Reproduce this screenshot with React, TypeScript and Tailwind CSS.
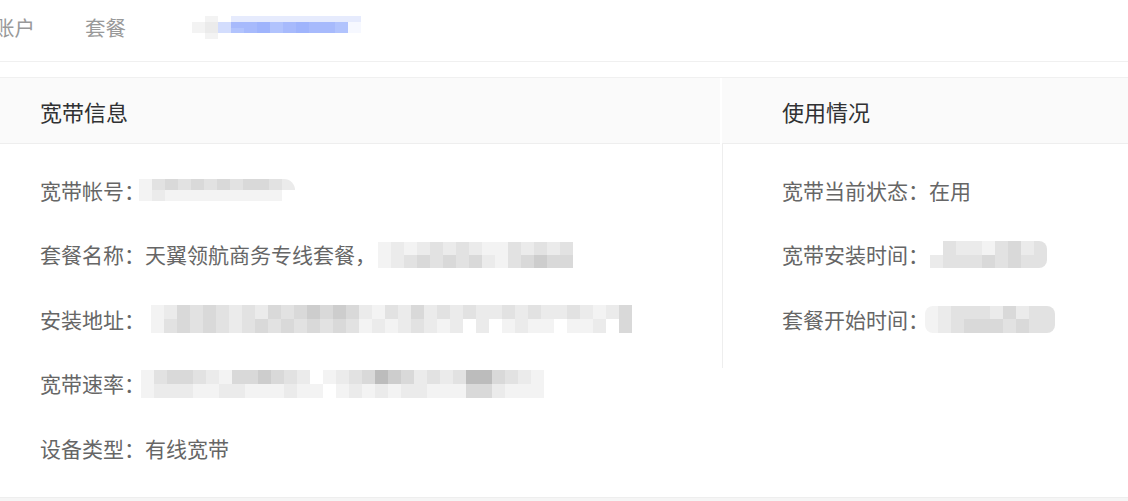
import React from 'react';

const tone: Record<string, string> = {
  '0': 'bg-white',
  w: 'bg-[#fafafa]',
  a: 'bg-[#f3f3f3]',
  b: 'bg-[#ebebeb]',
  c: 'bg-[#e2e2e2]',
  d: 'bg-[#d9d9d9]',
  e: 'bg-[#cdcdcd]',
  f: 'bg-[#bcbcbc]',
  p: 'bg-[#f6f8ff]',
  q: 'bg-[#e6ebfd]',
  r: 'bg-[#d3ddfd]',
  s: 'bg-[#a7bafc]',
  t: 'bg-[#b1c3fd]',
  u: 'bg-[#9fb4fc]',
};

// pixelated placeholder for masked values, one string per row
const Mosaic = ({ rows, className }: { rows: string[]; className: string }) => {
  const cols = rows[0].length;
  return (
    <div className={`flex shrink-0 overflow-hidden ${className}`}>
      {Array.from({ length: cols }).map((_, i) => (
        <div key={i} className="flex w-[13px] shrink-0 flex-col">
          {rows.map((row, j) => (
            <div key={j} className={`flex-1 ${tone[row[i]] || 'bg-white'}`} />
          ))}
        </div>
      ))}
    </div>
  );
};

const Row = ({ label, value, children }: { label: string; value?: string; children?: React.ReactNode }) => (
  <div className="flex h-[64.5px] items-center whitespace-nowrap text-[21px] text-[#666666]">
    <span>{label}：</span>
    {value && <span>{value}</span>}
    {children}
  </div>
);

export default function App() {
  return (
    <div className="h-[501px] w-[1128px] overflow-hidden bg-white font-['Noto_Sans_CJK_SC','Noto_Sans',sans-serif]">
      {/* tabs */}
      <div className="flex h-[62px] items-center border-b border-[#f0f0f0] pb-[6px] text-[20.5px] text-[#999999]">
        <span className="ml-[-6px]">账户</span>
        <span className="ml-[50px]">套餐</span>
        <Mosaic
          className="ml-[66px] h-[23px] blur-[0.5px]"
          rows={['0a0qqqqqqqqqq0', 'abrssutsusstp0', 'abrtsutsusstp0', '0a000000000000']}
        />
      </div>

      <div className="mt-[15px] grid grid-cols-[720px_2px_1fr] border-t border-[#f0f0f0]">
        {/* 宽带信息 */}
        <div>
          <div className="flex h-[66px] items-center border-b border-[#eeeeee] bg-[#fafafa] pl-[40px] pt-[2px] text-[22px] text-[#303133]">
            宽带信息
          </div>
          <div className="pl-[40px] pt-[14px] pb-[16px]">
            <Row label="宽带帐号">
              <Mosaic className="-ml-[6px] h-[22px] rounded-r-full blur-[0.5px]" rows={['acdcdcdcddcb', 'abaaaaaaaaa0']} />
            </Row>
            <Row label="套餐名称" value="天翼领航商务专线套餐，">
              <Mosaic className="ml-[2px] h-[26px] blur-[0.5px]" rows={['ababcbcbaacbcbc0', 'abcdcdcdbacdedd0']} />
            </Row>
            <Row label="安装地址">
              <Mosaic className="ml-[6px] h-[28px] blur-[0.5px]" rows={['abdcdcbcbdcdededbacbdbcbcbbcbcbbcbabd', 'acdcdcbcdcdcdcdcababcbab0b0abaa0aab0d']} />
            </Row>
            <Row label="宽带速率">
              <Mosaic className="ml-[-4px] h-[28px] blur-[0.5px]" rows={['acddcbaddedcb0abcdfedbcbcffdcba', 'abbbaabbaaabaa0abababbaaaddbaaa']} />
            </Row>
            <Row label="设备类型" value="有线宽带" />
          </div>
        </div>

        <div className="bg-white" />

        {/* 使用情况 */}
        <div>
          <div className="flex h-[66px] items-center border-b border-[#eeeeee] bg-[#fafafa] pl-[60px] pt-[2px] text-[22px] text-[#303133]">
            使用情况
          </div>
          <div className="self-start border-l border-[#eeeeee] pl-[59px] pt-[14px] pb-[16px]">
            <Row label="宽带当前状态" value="在用" />
            <Row label="宽带安装时间">
              <Mosaic className="ml-[1px] h-[27px] rounded-r-lg blur-[0.5px]" rows={['0cbbacdbc', 'bcccdcdcc']} />
            </Row>
            <Row label="套餐开始时间">
              <Mosaic className="-ml-[4px] h-[27px] rounded-lg blur-[0.5px]" rows={['abcccbdbcc', 'abcdddcdcc']} />
            </Row>
          </div>
        </div>
      </div>

      <div className="h-[10px] border-t border-[#eeeeee] bg-[#f5f5f5]" />
    </div>
  );
}
